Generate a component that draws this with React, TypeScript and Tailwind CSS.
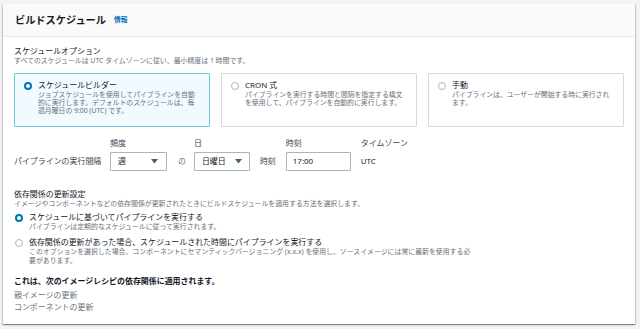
import React from "react";

const FONT = { fontFamily: '"Noto Sans", "Noto Sans CJK JP", sans-serif' };

function Radio({ checked }: { checked?: boolean }) {
  return checked ? (
    <span className="inline-block w-[8px] h-[8px] rounded-full border-[2.5px] border-[#0073bb] bg-white shrink-0" />
  ) : (
    <span className="inline-block w-[8px] h-[8px] rounded-full border border-[#aab7b8] bg-white shrink-0" />
  );
}

function Tile({
  checked,
  title,
  children,
}: {
  checked?: boolean;
  title: string;
  children: React.ReactNode;
}) {
  return (
    <div
      className={
        "flex-1 border rounded-[1px] pl-[9px] pr-[6px] pt-[6px] pb-[11px] " +
        (checked ? "border-[#6cc4de] bg-[#f1faff]" : "border-[#d5dbdb] bg-white")
      }
    >
      <div className="flex gap-[6px]">
        <div className="h-[11px] flex items-center">
          <Radio checked={checked} />
        </div>
        <div>
          <div className="text-[7.95px] leading-[11px] text-[#16191f]">{title}</div>
          <div className="text-[6.85px] leading-[8px] text-[#687078]">{children}</div>
        </div>
      </div>
    </div>
  );
}

function Caret() {
  return (
    <svg width="7" height="5" viewBox="0 0 7 5">
      <path d="M0 0 L7 0 L3.5 4.5 Z" fill="#545b64" />
    </svg>
  );
}

export default function App() {
  return (
    <div className="w-[640px] h-[329px] bg-[#f2f3f3] pt-[4px] px-[3px] overflow-hidden" style={FONT}>
      <div className="w-[632px] bg-white shadow-[0_1px_1px_0_rgba(0,28,36,0.3),1px_1px_1px_0_rgba(0,28,36,0.15),-1px_1px_1px_0_rgba(0,28,36,0.15)]">
        <div className="h-[33px] bg-[#fafafa] border-b border-[#eaeded] flex items-center px-[12px] gap-[8px]">
          <span className="text-[10.2px] font-bold text-[#16191f] leading-none">ビルドスケジュール</span>
          <span className="text-[6.8px] font-bold text-[#0073bb] leading-none mt-[1px]">情報</span>
        </div>
        <div className="px-[11px] pt-[9px] pb-[11px]">
          <div className="text-[7.95px] leading-[11px] text-[#16191f]">スケジュールオプション</div>
          <div className="text-[6.9px] leading-[8px] text-[#687078]">
            すべてのスケジュールは UTC タイムゾーンに従い、最小精度は 1 時間です。
          </div>
          <div className="flex gap-[11px] mt-[8px]">
            <Tile checked title="スケジュールビルダー">
              ジョブスケジュールを使用してパイプラインを自動
              <br />
              的に実行します。デフォルトのスケジュールは、毎
              <br />
              週月曜日の 9:00 (UTC) です。
            </Tile>
            <Tile title="CRON 式">
              パイプラインを実行する時間と間隔を指定する構文
              <br />
              を使用して、パイプラインを自動的に実行します。
            </Tile>
            <Tile title="手動">
              パイプラインは、ユーザーが開始する時に実行され
              <br />
              ます。
            </Tile>
          </div>

          <div className="flex items-end mt-[11px] text-[7.95px] text-[#414750]">
            <div className="w-[96px] h-[19px] flex items-center">パイプラインの実行間隔</div>
            <div className="flex flex-col">
              <div className="leading-[11px] mb-[3px]">頻度</div>
              <div className="w-[57px] h-[19px] border border-[#aab7b8] rounded-[1px] flex items-center justify-between pl-[7px] pr-[8px] text-[#16191f]">
                <span>週</span>
                <Caret />
              </div>
            </div>
            <div className="h-[19px] flex items-center ml-[11px] mr-[8px] text-[#687078]">の</div>
            <div className="flex flex-col">
              <div className="leading-[11px] mb-[3px]">日</div>
              <div className="w-[56px] h-[19px] border border-[#aab7b8] rounded-[1px] flex items-center justify-between pl-[7px] pr-[7px] text-[#16191f]">
                <span>日曜日</span>
                <Caret />
              </div>
            </div>
            <div className="h-[19px] flex items-center ml-[10px] mr-[10px]">時刻</div>
            <div className="flex flex-col">
              <div className="leading-[11px] mb-[3px]">時刻</div>
              <div className="w-[65px] h-[19px] border border-[#aab7b8] rounded-[1px] flex items-center pl-[6px] text-[#16191f]">
                17:00
              </div>
            </div>
            <div className="flex flex-col ml-[10px]">
              <div className="leading-[11px] mb-[3px]">タイムゾーン</div>
              <div className="h-[19px] flex items-center text-[#16191f]">UTC</div>
            </div>
          </div>

          <div className="mt-[18px] text-[7.95px] leading-[11px] text-[#16191f]">依存関係の更新設定</div>
          <div className="text-[6.9px] leading-[8px] text-[#687078]">
            イメージやコンポーネントなどの依存関係が更新されたときにビルドスケジュールを適用する方法を選択します。
          </div>

          <div className="flex gap-[6px] mt-[4px] pl-[1px]">
            <div className="h-[11px] flex items-center">
              <Radio checked />
            </div>
            <div>
              <div className="text-[7.95px] leading-[11px] text-[#16191f]">スケジュールに基づいてパイプラインを実行する</div>
              <div className="text-[6.9px] leading-[8px] text-[#687078]">
                パイプラインは定期的なスケジュールに従って実行されます。
              </div>
            </div>
          </div>
          <div className="flex gap-[6px] mt-[6px] pl-[1px]">
            <div className="h-[11px] flex items-center">
              <Radio />
            </div>
            <div>
              <div className="text-[7.95px] leading-[11px] text-[#16191f]">
                依存関係の更新があった場合、スケジュールされた時間にパイプラインを実行する
              </div>
              <div className="text-[6.9px] leading-[8.5px] text-[#687078]">
                このオプションを選択した場合、コンポーネントにセマンティックバージョニング (x.x.x) を使用し、ソースイメージには常に最新を使用する必
                <br />
                要があります。
              </div>
            </div>
          </div>

          <div className="mt-[11px] text-[7.95px] leading-[11px] font-bold text-[#16191f]">
            これは、次のイメージレシピの依存関係に適用されます。
          </div>
          <div className="mt-[2px] text-[7.95px] leading-[12px] text-[#687078]">親イメージの更新</div>
          <div className="text-[7.95px] leading-[12px] text-[#687078]">コンポーネントの更新</div>
        </div>
      </div>
    </div>
  );
}
